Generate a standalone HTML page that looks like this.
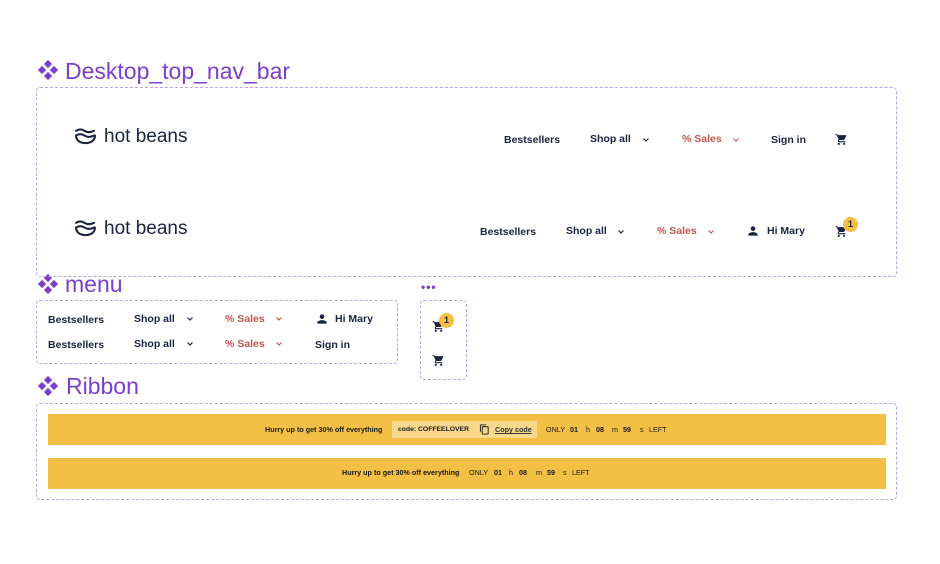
<!DOCTYPE html>
<html><head><meta charset="utf-8"><style>
*{margin:0;padding:0;box-sizing:border-box}
body{width:940px;height:564px;background:#fff;position:relative;overflow:hidden;font-family:"Liberation Sans",sans-serif}
.a{position:absolute;white-space:nowrap}
.frame{position:absolute;border:1px dashed #b3a3ee;border-radius:4px}
.title{position:absolute;color:#7b3fd0;font-size:23px;line-height:24px}
.n{position:absolute;white-space:nowrap;font-size:10.5px;font-weight:bold;color:#1a2340;line-height:12px}
.s{color:#c9534c}
.chev{position:absolute;width:10px;height:8px}
.r{position:absolute;white-space:nowrap;font-size:7.2px;color:#1a1a1a;line-height:10px}
.b{font-weight:bold}
.badge{position:absolute;width:15px;height:15px;border-radius:50%;background:#f4bf45;color:#1a2340;font-size:9px;font-weight:bold;text-align:center;line-height:15px}
</style></head><body>
<svg width="0" height="0" style="position:absolute"><defs>
<symbol id="cart" viewBox="0 0 24 24"><path fill="#1a2340" d="M7 18c-1.1 0-2 .9-2 2s.9 2 2 2 2-.9 2-2-.9-2-2-2zM1 2v2h2l3.6 7.59-1.35 2.45C4.52 15.37 5.48 17 7 17h12v-2H7.42c-.14 0-.25-.11-.25-.25l.03-.12.9-1.63h7.45c.75 0 1.41-.41 1.750-1.03l3.58-6.490A1 1 0 0 0 20 4H5.21l-.94-2H1zm16 16c-1.1 0-2 .9-2 2s.9 2 2 2 2-.9 2-2-.9-2-2-2z"/></symbol>
<symbol id="chev" viewBox="0 0 10 8"><path d="M2.5 2.5l2.5 2.5 2.5-2.5" fill="none" stroke-width="1.2"/></symbol>
<symbol id="user" viewBox="0 0 24 24"><path fill="#1a2340" d="M12 12c2.2 0 4-1.8 4-4s-1.8-4-4-4-4 1.8-4 4 1.8 4 4 4zm0 2c-2.7 0-8 1.3-8 4v2h16v-2c0-2.7-5.3-4-8-4z"/></symbol>
<symbol id="dia" viewBox="0 0 24 24"><g fill="#7b3fd0"><path d="M12 1l4.5 4.5L12 10 7.5 5.5z"/><path d="M12 14l4.5 4.5L12 23l-4.5-4.5z"/><path d="M1 12l4.5-4.5L10 12l-4.5 4.5z"/><path d="M14 12l4.5-4.5L23 12l-4.5 4.5z"/></g></symbol>
<symbol id="logo" viewBox="0 0 24 18"><g fill="none" stroke="#1a2340" stroke-width="2.2" stroke-linecap="round"><path d="M2 3c3-2 6-2 9 0s6 2 10 0"/><path d="M2 8c3-2 6-2 9 0s6 2 10 0"/><path d="M2 8c0 5 4 8 10 8s10-3 10-8"/></g></symbol>
<symbol id="copy" viewBox="0 0 24 24"><path fill="#1a1a1a" d="M16 1H4c-1.1 0-2 .9-2 2v14h2V3h12V1zm3 4H8c-1.1 0-2 .9-2 2v14c0 1.1.9 2 2 2h11c1.1 0 2-.9 2-2V7c0-1.1-.9-2-2-2zm0 16H8V7h11v14z"/></symbol>
</defs></svg>

<svg class="a" style="left:37px;top:59px" width="22" height="22"><use href="#dia"/></svg>
<div class="title" style="left:65px;top:59px">Desktop_top_nav_bar</div>
<svg class="a" style="left:37px;top:273px" width="22" height="22"><use href="#dia"/></svg>
<div class="title" style="left:65px;top:272px">menu</div>
<svg class="a" style="left:37px;top:375px" width="22" height="22"><use href="#dia"/></svg>
<div class="title" style="left:66px;top:374px">Ribbon</div>
<div class="a" style="left:421px;top:280px;color:#7b3fd0;font-size:12px;letter-spacing:1px;font-weight:bold">•••</div>

<div class="frame" style="left:36px;top:87px;width:861px;height:190px"></div>
<div class="frame" style="left:36px;top:300px;width:362px;height:64px"></div>
<div class="frame" style="left:420px;top:300px;width:47px;height:80px"></div>
<div class="frame" style="left:36px;top:403px;width:861px;height:97px"></div>

<svg class="a" style="left:74px;top:128px" width="23" height="17"><use href="#logo"/></svg>
<div class="a" style="left:104px;top:125px;font-size:19px;color:#1a2340;line-height:24px">hot beans</div>
<div class="n" style="left:504px;top:134px">Bestsellers</div>
<div class="n" style="left:590px;top:133px">Shop all</div>
<svg class="chev" style="left:641px;top:136px" stroke="#1a2340"><use href="#chev"/></svg>
<div class="n s" style="left:682px;top:133px">% Sales</div>
<svg class="chev" style="left:731px;top:136px" stroke="#c9534c"><use href="#chev"/></svg>
<div class="n" style="left:771px;top:134px">Sign in</div>
<svg class="a" style="left:835px;top:133px" width="13" height="13"><use href="#cart"/></svg>

<svg class="a" style="left:74px;top:220px" width="23" height="17"><use href="#logo"/></svg>
<div class="a" style="left:104px;top:217px;font-size:19px;color:#1a2340;line-height:24px">hot beans</div>
<div class="n" style="left:480px;top:226px">Bestsellers</div>
<div class="n" style="left:566px;top:225px">Shop all</div>
<svg class="chev" style="left:616px;top:228px" stroke="#1a2340"><use href="#chev"/></svg>
<div class="n s" style="left:657px;top:225px">% Sales</div>
<svg class="chev" style="left:706px;top:228px" stroke="#c9534c"><use href="#chev"/></svg>
<svg class="a" style="left:746px;top:224px" width="14" height="14"><use href="#user"/></svg>
<div class="n" style="left:767px;top:225px">Hi Mary</div>
<svg class="a" style="left:835px;top:225px" width="13" height="13"><use href="#cart"/></svg>
<div class="badge" style="left:843px;top:217px">1</div>

<div class="n" style="left:48px;top:314px">Bestsellers</div>
<div class="n" style="left:134px;top:313px">Shop all</div>
<svg class="chev" style="left:185px;top:315px" stroke="#1a2340"><use href="#chev"/></svg>
<div class="n s" style="left:225px;top:313px">% Sales</div>
<svg class="chev" style="left:274px;top:315px" stroke="#c9534c"><use href="#chev"/></svg>
<svg class="a" style="left:315px;top:312px" width="14" height="14"><use href="#user"/></svg>
<div class="n" style="left:335px;top:313px">Hi Mary</div>
<div class="n" style="left:48px;top:339px">Bestsellers</div>
<div class="n" style="left:134px;top:338px">Shop all</div>
<svg class="chev" style="left:185px;top:340px" stroke="#1a2340"><use href="#chev"/></svg>
<div class="n s" style="left:225px;top:338px">% Sales</div>
<svg class="chev" style="left:274px;top:340px" stroke="#c9534c"><use href="#chev"/></svg>
<div class="n" style="left:315px;top:339px">Sign in</div>

<svg class="a" style="left:432px;top:320px" width="13" height="13"><use href="#cart"/></svg>
<div class="badge" style="left:439px;top:313px">1</div>
<svg class="a" style="left:432px;top:354px" width="13" height="13"><use href="#cart"/></svg>

<div class="a" style="left:48px;top:414px;width:838px;height:31px;background:#f4bf45"></div>
<div class="r b" style="left:265px;top:425px">Hurry up to get 30% off everything</div>
<div class="a" style="left:392px;top:421px;width:145px;height:17px;background:#f8d88a"></div>
<div class="r b" style="left:398px;top:425px;font-size:6.8px">code: COFFEELOVER</div>
<svg class="a" style="left:479px;top:424px" width="11" height="11"><use href="#copy"/></svg>
<div class="r" style="left:495px;top:425px;text-decoration:underline;font-weight:bold;color:#333">Copy code</div>
<div class="r" style="left:546px;top:425px">ONLY</div>
<div class="r b" style="left:570px;top:425px">01</div>
<div class="r" style="left:586px;top:425px">h</div>
<div class="r b" style="left:596px;top:425px">08</div>
<div class="r" style="left:612px;top:425px">m</div>
<div class="r b" style="left:623px;top:425px">59</div>
<div class="r" style="left:640px;top:425px">s</div>
<div class="r" style="left:649px;top:425px">LEFT</div>

<div class="a" style="left:48px;top:458px;width:838px;height:31px;background:#f4bf45"></div>
<div class="r b" style="left:342px;top:468px">Hurry up to get 30% off everything</div>
<div class="r" style="left:469px;top:468px">ONLY</div>
<div class="r b" style="left:494px;top:468px">01</div>
<div class="r" style="left:509px;top:468px">h</div>
<div class="r b" style="left:519px;top:468px">08</div>
<div class="r" style="left:536px;top:468px">m</div>
<div class="r b" style="left:547px;top:468px">59</div>
<div class="r" style="left:563px;top:468px">s</div>
<div class="r" style="left:572px;top:468px">LEFT</div>
</body></html>
